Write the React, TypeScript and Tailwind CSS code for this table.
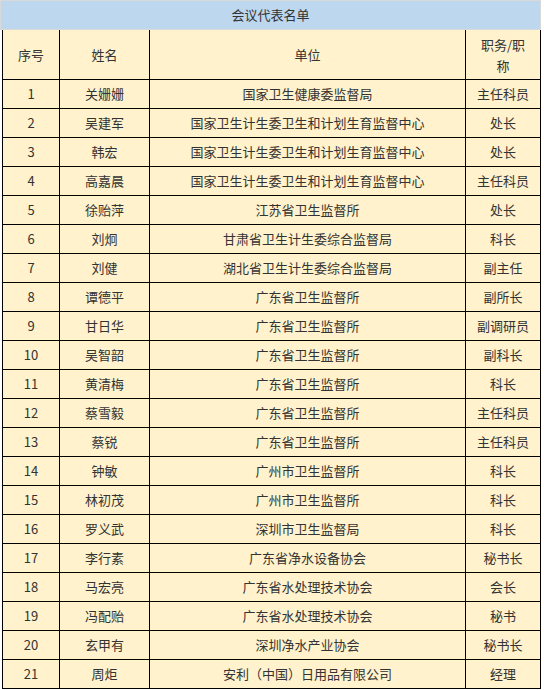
const ROWS: [string, string, string][] = [
  ["关姗姗", "国家卫生健康委监督局", "主任科员"],
  ["吴建军", "国家卫生计生委卫生和计划生育监督中心", "处长"],
  ["韩宏", "国家卫生计生委卫生和计划生育监督中心", "处长"],
  ["高嘉晨", "国家卫生计生委卫生和计划生育监督中心", "主任科员"],
  ["徐贻萍", "江苏省卫生监督所", "处长"],
  ["刘炯", "甘肃省卫生计生委综合监督局", "科长"],
  ["刘健", "湖北省卫生计生委综合监督局", "副主任"],
  ["谭德平", "广东省卫生监督所", "副所长"],
  ["甘日华", "广东省卫生监督所", "副调研员"],
  ["吴智韶", "广东省卫生监督所", "副科长"],
  ["黄清梅", "广东省卫生监督所", "科长"],
  ["蔡雪毅", "广东省卫生监督所", "主任科员"],
  ["蔡锐", "广东省卫生监督所", "主任科员"],
  ["钟敏", "广州市卫生监督所", "科长"],
  ["林初茂", "广州市卫生监督所", "科长"],
  ["罗义武", "深圳市卫生监督局", "科长"],
  ["李行素", "广东省净水设备协会", "秘书长"],
  ["马宏亮", "广东省水处理技术协会", "会长"],
  ["冯配贻", "广东省水处理技术协会", "秘书"],
  ["玄甲有", "深圳净水产业协会", "秘书长"],
  ["周炬", "安利（中国）日用品有限公司", "经理"],
];

const cell = "flex items-center justify-center border-l border-b border-black";

export default function App() {
  return (
    <div
      className="w-[544px] h-[690px] overflow-hidden bg-white text-[13px] text-[#333333]"
      style={{ fontFamily: '"Noto Sans CJK SC", "Noto Sans", sans-serif' }}
    >
      <div className="flex h-[30px] w-[541px] items-center justify-center border border-[#d9d9d9] bg-[#bdd7ee]">
        会议代表名单
      </div>

      <div className="ml-[2px] grid w-[539px] grid-cols-[57px_90px_316px_76px] bg-[#fff2cc]">
        <div className={`${cell} h-[50px]`}>序号</div>
        <div className={`${cell} h-[50px]`}>姓名</div>
        <div className={`${cell} h-[50px]`}>单位</div>
        <div className={`${cell} h-[50px] border-r text-center leading-[21px]`}>
          职务/职
          <br />称
        </div>

        {ROWS.map(([name, org, title], i) => (
          <div key={i} className="contents">
            <div className={`${cell} h-[29px]`}>{i + 1}</div>
            <div className={`${cell} h-[29px]`}>{name}</div>
            <div className={`${cell} h-[29px]`}>{org}</div>
            <div className={`${cell} h-[29px] border-r`}>{title}</div>
          </div>
        ))}
      </div>
    </div>
  );
}
